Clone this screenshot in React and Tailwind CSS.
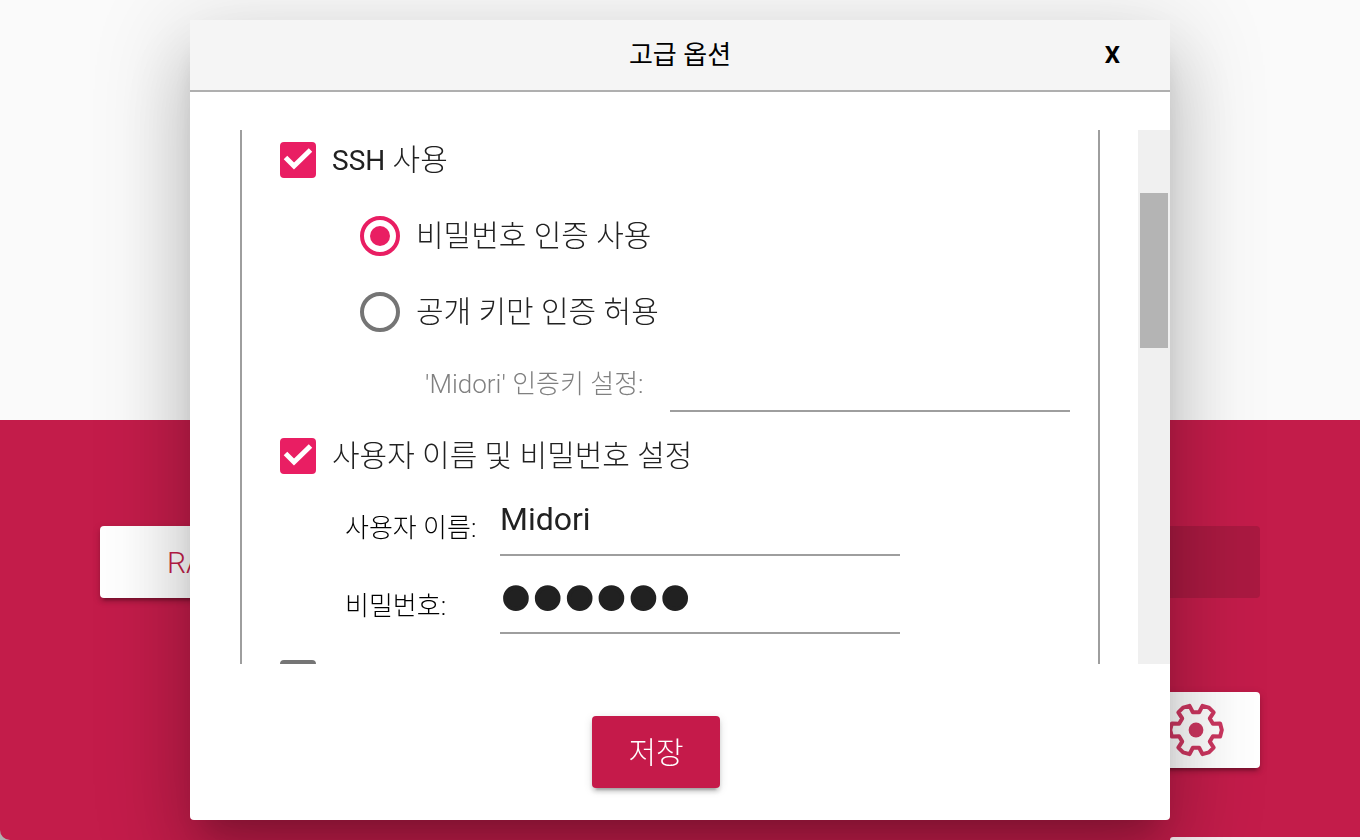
import React from "react";

const gearPoints = Array.from({ length: 6 }, (_, i) => i * 60)
  .flatMap((a) => [
    [a - 20, 18],
    [a - 15, 25],
    [a, 25.8],
    [a + 15, 25],
    [a + 20, 18],
  ])
  .map(([deg, r]) => {
    const t = (deg * Math.PI) / 180;
    return `${(28 + r * Math.cos(t)).toFixed(2)},${(28 + r * Math.sin(t)).toFixed(2)}`;
  })
  .join(" ");

function GearIcon() {
  return (
    <svg viewBox="0 0 56 56" className="h-14 w-14" fill="none" aria-hidden="true">
      <polygon points={gearPoints} stroke="#cd3660" strokeWidth="4" strokeLinejoin="round" />
      <circle cx="28" cy="28" r="7.4" fill="#cd3660" />
    </svg>
  );
}

function Check({ id, checked, children }) {
  return (
    <div className="flex h-9 items-center gap-4">
      <span className="grid shrink-0">
        <input
          id={id}
          type="checkbox"
          defaultChecked={checked}
          className="peer col-start-1 row-start-1 h-9 w-9 appearance-none rounded border-4 border-[#757575] checked:border-[#e91e63] checked:bg-[#e91e63]"
        />
        <svg
          viewBox="0 0 36 36"
          className="pointer-events-none invisible col-start-1 row-start-1 h-9 w-9 peer-checked:visible"
          fill="none"
          aria-hidden="true"
        >
          <path d="M5.5 15.5 14 24 30.5 8" stroke="#fff" strokeWidth="5" />
        </svg>
      </span>
      <label htmlFor={id} className="text-[30px] leading-9 font-light text-[#212121]">
        {children}
      </label>
    </div>
  );
}

function Radio({ id, checked, children }) {
  return (
    <div className="flex h-10 items-center gap-4">
      <span className="grid shrink-0 place-items-center">
        <input
          id={id}
          type="radio"
          name="ssh-auth"
          defaultChecked={checked}
          className="peer col-start-1 row-start-1 h-10 w-10 appearance-none rounded-full border-4 border-[#757575] checked:border-[#e91e63]"
        />
        <span className="pointer-events-none invisible col-start-1 row-start-1 h-5 w-5 rounded-full bg-[#e91e63] peer-checked:visible" />
      </span>
      <label htmlFor={id} className="text-[30px] leading-10 font-light text-[#212121]">
        {children}
      </label>
    </div>
  );
}

const elevated =
  "rounded shadow-[0_6px_2px_-4px_rgba(0,0,0,0.2),0_4px_4px_0_rgba(0,0,0,0.14),0_2px_10px_0_rgba(0,0,0,0.12)]";
const field =
  "h-[72px] w-[400px] border-b-2 border-[#9e9e9e] bg-transparent text-[#212121] outline-none";
const fieldLabel = "shrink-0 pt-4 text-[26px] leading-8 font-light";

export default function App() {
  return (
    <div className="min-h-screen bg-[#b0b0b0] font-['Roboto','Noto_Sans_CJK_KR',sans-serif]">
      <div className="flex h-screen flex-col overflow-hidden rounded-bl-[10px]">
        <div className="flex-1 bg-[#fafafa]" />
        <div className="flex flex-1 flex-col bg-[#c31c4a]">
          <div className="mt-[106px] flex justify-between px-[100px]">
            <button type="button" className={`${elevated} h-[72px] w-80 bg-white pl-[67px] text-left text-[30px] font-light text-[#c31c4a]`}>
              RA
            </button>
            <button type="button" aria-label="쓰기" disabled className="h-[72px] w-80 rounded bg-[#aa1941]" />
          </div>
          <div className="mt-[94px] flex justify-end px-[100px]">
            <button type="button" aria-label="설정" className={`${elevated} flex h-[76px] w-32 items-center justify-center bg-white`}>
              <GearIcon />
            </button>
          </div>
          <div className="mt-auto h-[3px] w-[190px] self-end rounded-tl-lg bg-[#f8eef0]" />
        </div>
      </div>

      <div className="fixed inset-0 flex justify-center p-5">
        <div
          role="dialog"
          aria-labelledby="dialog-title"
          className="flex w-full max-w-[980px] flex-col rounded-b bg-white shadow-[0_22px_30px_-14px_rgba(0,0,0,0.2),0_48px_76px_6px_rgba(0,0,0,0.14),0_18px_92px_16px_rgba(0,0,0,0.12)]"
        >
          <header className="grid h-[72px] shrink-0 grid-cols-[1fr_auto_1fr] items-center border-b-2 border-[#afafaf] bg-[#f5f5f5] text-black">
            <h1 id="dialog-title" className="col-start-2 text-[26px] leading-8 font-normal">
              고급 옵션
            </h1>
            <button type="button" aria-label="X" className="mr-[50px] justify-self-end text-2xl leading-8 font-bold">
              X
            </button>
          </header>

          <div className="mt-[38px] flex min-h-0 flex-1 overflow-hidden pl-[50px]">
            <div className="min-w-0 flex-1 overflow-hidden border-x-2 border-[#9e9e9e] pt-3 pl-[38px]">
              <Check id="ssh" checked>
                <span className="text-[28px] font-normal">SSH</span> 사용
              </Check>
              <div className="mt-[38px] flex flex-col gap-9 pl-20">
                <Radio id="auth-password" checked>비밀번호 인증 사용</Radio>
                <Radio id="auth-key">공개 키만 인증 허용</Radio>
              </div>
              <div className="mt-2 flex items-center pl-[145px]">
                <label htmlFor="key" className={`${fieldLabel} w-[245px] text-[#808080]`}>
                  'Midori' 인증키 설정:
                </label>
                <input id="key" type="text" className={`${field} text-[32px]`} />
              </div>
              <div className="mt-[26px]">
                <Check id="user" checked>사용자 이름 및 비밀번호 설정</Check>
              </div>
              <div className="mt-[10px] flex flex-col gap-[6px] pl-[65px]">
                <div className="flex items-center">
                  <label htmlFor="name" className={`${fieldLabel} w-[155px] text-black`}>사용자 이름:</label>
                  <input id="name" type="text" defaultValue="Midori" className={`${field} text-[32px]`} />
                </div>
                <div className="flex items-center">
                  <label htmlFor="password" className={`${fieldLabel} w-[155px] text-black`}>비밀번호:</label>
                  <input id="password" type="password" defaultValue="midori" className={`${field} font-['Liberation_Serif',serif] text-[91px] leading-[70px] [-webkit-text-stroke:4px_#212121]`} />
                </div>
              </div>
              <div className="mt-[26px]">
                <Check id="wifi" />
              </div>
            </div>
            <div className="ml-[38px] w-8 shrink-0 bg-[#f0f0f0] px-[2px] pt-[63px]">
              <div className="h-[155px] bg-[#b4b4b4]" />
            </div>
          </div>

          <footer className="flex shrink-0 justify-center pt-[52px] pr-12 pb-8">
            <button type="button" className={`${elevated} h-[72px] w-32 bg-[#c51a4a] text-[30px] font-light text-white`}>
              저장
            </button>
          </footer>
        </div>
      </div>
    </div>
  );
}
